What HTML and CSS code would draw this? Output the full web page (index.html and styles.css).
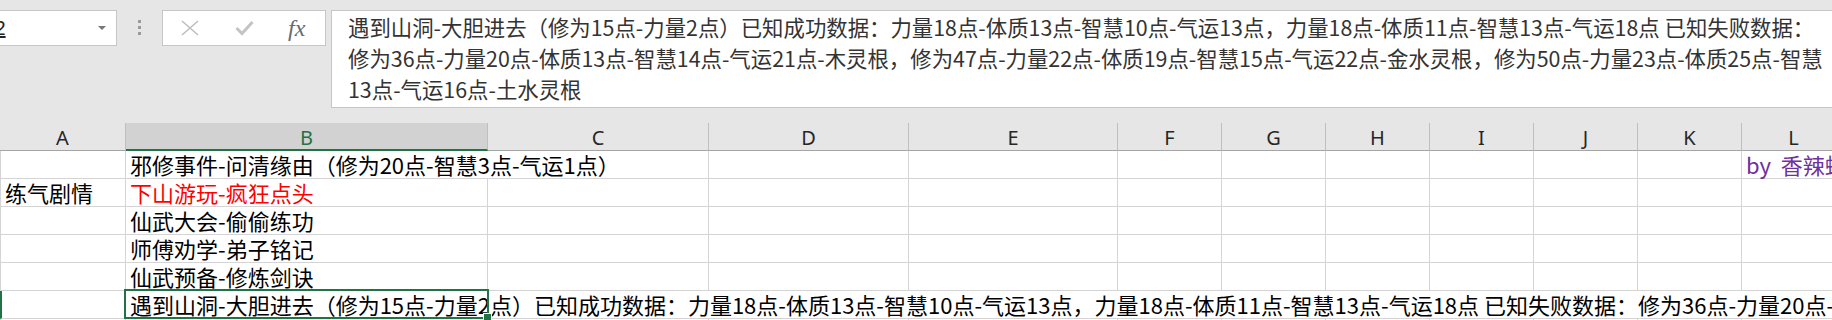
FILE: index.html
```html
<!DOCTYPE html>
<html>
<head>
  <meta charset="UTF-8">
  <title>练气剧情</title>
  <link rel="stylesheet" href="styles.css">
</head>
<body>
  <!-- 编辑栏 -->
  <div class="topbar">
    <div class="namebox"><span class="name">B12</span><span class="caret"></span></div>
    <div class="grip"><i></i><i></i><i></i></div>
    <div class="fxbox">
      <svg class="ic-x" width="18" height="16" viewBox="0 0 18 16"><path d="M1 1 L17 15 M17 1 L1 15" stroke="#bfbfbf" stroke-width="1.6" fill="none"/></svg>
      <svg class="ic-ok" width="19" height="16" viewBox="0 0 19 16"><path d="M1.5 8 L7 13.5 L17.5 2" stroke="#c4c4c4" stroke-width="3" fill="none"/></svg>
      <span class="fx">fx</span>
    </div>
    <div class="formula">遇到山洞-大胆进去（修为15点-力量2点）已知成功数据：力量18点-体质13点-智慧10点-气运13点，力量18点-体质11点-智慧13点-气运18点 已知失败数据：<br>修为36点-力量20点-体质13点-智慧14点-气运21点-木灵根，修为47点-力量22点-体质19点-智慧15点-气运22点-金水灵根，修为50点-力量23点-体质25点-智慧<br>13点-气运16点-土水灵根</div>
  </div>

  <!-- 表格 -->
  <div class="sheet">
    <div class="hd">A</div>
    <div class="hd on">B</div>
    <div class="hd">C</div>
    <div class="hd">D</div>
    <div class="hd">E</div>
    <div class="hd">F</div>
    <div class="hd">G</div>
    <div class="hd">H</div>
    <div class="hd">I</div>
    <div class="hd">J</div>
    <div class="hd">K</div>
    <div class="hd">L</div>

    <div class="c first"></div>
    <div class="c span2">邪修事件-问清缘由（修为20点-智慧3点-气运1点）</div>
    <div class="c"></div><div class="c"></div><div class="c"></div><div class="c"></div>
    <div class="c"></div><div class="c"></div><div class="c"></div><div class="c"></div>
    <div class="c purple">by  香辣蛙</div>

    <div class="c first">练气剧情</div>
    <div class="c red">下山游玩-疯狂点头</div>
    <div class="c"></div><div class="c"></div><div class="c"></div><div class="c"></div><div class="c"></div>
    <div class="c"></div><div class="c"></div><div class="c"></div><div class="c"></div><div class="c"></div>

    <div class="c first"></div>
    <div class="c">仙武大会-偷偷练功</div>
    <div class="c"></div><div class="c"></div><div class="c"></div><div class="c"></div><div class="c"></div>
    <div class="c"></div><div class="c"></div><div class="c"></div><div class="c"></div><div class="c"></div>

    <div class="c first"></div>
    <div class="c">师傅劝学-弟子铭记</div>
    <div class="c"></div><div class="c"></div><div class="c"></div><div class="c"></div><div class="c"></div>
    <div class="c"></div><div class="c"></div><div class="c"></div><div class="c"></div><div class="c"></div>

    <div class="c first"></div>
    <div class="c">仙武预备-修炼剑诀</div>
    <div class="c"></div><div class="c"></div><div class="c"></div><div class="c"></div><div class="c"></div>
    <div class="c"></div><div class="c"></div><div class="c"></div><div class="c"></div><div class="c"></div>

    <div class="c first row-on"></div>
    <div class="c span-rest">遇到山洞-大胆进去（修为15点-力量2点）已知成功数据：力量18点-体质13点-智慧10点-气运13点，力量18点-体质11点-智慧13点-气运18点 已知失败数据：修为36点-力量20点-体质13点-智慧14点-气运21点-木灵根<div class="sel"><span class="handle"></span></div></div>

    <div class="c first"></div>
    <div class="c"></div><div class="c"></div><div class="c"></div><div class="c"></div><div class="c"></div><div class="c"></div>
    <div class="c"></div><div class="c"></div><div class="c"></div><div class="c"></div><div class="c"></div>
  </div>
</body>
</html>
```

FILE: styles.css
```css
body {
  margin: 0;
  width: 1832px;
  height: 320px;
  overflow: hidden;
  background: #fff;
  font-family: "Noto Sans CJK SC", sans-serif;
}

/* 编辑栏 */
.topbar {
  display: flex;
  align-items: flex-start;
  height: 123px;
  padding-top: 10px;
  box-sizing: border-box;
  background: #e6e6e6;
  overflow: hidden;
}
.namebox {
  flex: none;
  display: flex;
  align-items: center;
  width: 157px;
  height: 36px;
  margin-left: -40px;
  box-sizing: border-box;
  border: 1px solid #c6c6c6;
  background: #fff;
}
.namebox .name { padding-left: 9px; font: 20px "Liberation Sans", sans-serif; color: #222; text-decoration: underline; }
.caret {
  margin-left: auto;
  margin-right: 10px;
  border-left: 4px solid transparent;
  border-right: 4px solid transparent;
  border-top: 4px solid #777;
}
.grip {
  flex: none;
  width: 45px;
  height: 34px;
  display: flex;
  flex-direction: column;
  align-items: center;
  justify-content: center;
  gap: 3px;
}
.grip i { width: 3px; height: 3px; background: #9a9a9a; }
.fxbox {
  flex: none;
  display: flex;
  align-items: center;
  width: 164px;
  height: 36px;
  padding-left: 18px;
  box-sizing: border-box;
  border: 1px solid #c6c6c6;
  background: #fff;
}
.ic-ok { margin-left: 36px; }
.fx { margin-left: 34px; font: italic 24px "Liberation Serif", serif; color: #6b6b6b; line-height: 24px; }
.formula {
  flex: 1;
  margin-left: 5px;
  margin-right: -6px;
  height: 98px;
  box-sizing: border-box;
  border: 1px solid #c6c6c6;
  background: #fff;
  padding-left: 16px;
  font-size: 21.4px;
  line-height: 31px;
  color: #333;
  white-space: nowrap;
  overflow: hidden;
}

/* 表格 */
.sheet {
  display: grid;
  grid-template-columns: 126px 362px 221px 200px 209px repeat(7, 104px);
  grid-auto-rows: 28px;
  height: 197px;
  overflow: hidden;
}
.hd {
  box-sizing: border-box;
  padding-top: 3px;
  background: #e6e6e6;
  border-right: 1px solid #bfbfbf;
  border-bottom: 1px solid #a5a5a5;
  text-align: center;
  font: 20px/24px "Noto Sans", sans-serif;
  color: #262626;
}
.hd.on { background: #d2d2d2; color: #217346; border-bottom: 2px solid #217346; }
.c {
  box-sizing: border-box;
  padding-left: 4px;
  border-right: 1px solid #d4d4d4;
  border-bottom: 1px solid #d4d4d4;
  font-size: 22px;
  line-height: 27px;
  white-space: pre;
  color: #000;
}
.c.first { border-left: 1px solid #d4d4d4; }
.c.row-on { border-left: 2px solid #217346; }
.span2 { grid-column: span 2; }
.span-rest { grid-column: span 11; position: relative; border-right: none; }
.red { color: #f00; }
.purple { color: #7030a0; }
.sel {
  position: absolute;
  left: -2px;
  top: -2px;
  width: 365px;
  height: 30px;
  box-sizing: border-box;
  border: 2px solid #217346;
}
.handle {
  position: absolute;
  right: -5px;
  bottom: -5px;
  width: 7px;
  height: 7px;
  background: #217346;
  border: 1px solid #fff;
}
```
